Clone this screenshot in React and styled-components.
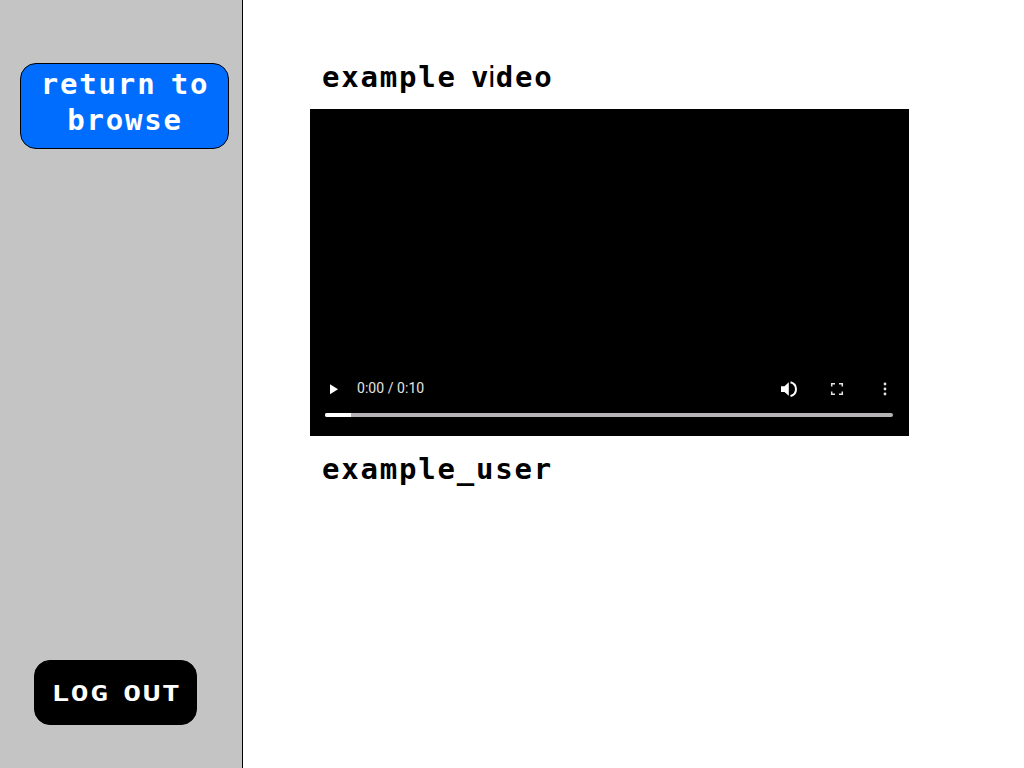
import React from 'react';
import styled, { createGlobalStyle } from 'styled-components';

const GlobalStyle = createGlobalStyle`
  * { box-sizing: border-box; }
  body { margin: 0; background: #fff; overflow: hidden; }
`;

const Page = styled.div`
  display: flex;
  width: 1024px;
  height: 768px;
  font-family: "DejaVu Sans Mono", monospace;
  font-weight: 700;
`;

const Sidebar = styled.aside`
  display: flex;
  flex-direction: column;
  justify-content: space-between;
  align-items: flex-start;
  width: 243px;
  height: 768px;
  flex: none;
  padding: 63px 0 43px 20px;
  background: #c4c4c4;
  border-right: 1px solid #000;
`;

const Button = styled.button`
  font: inherit;
  color: #fff;
  margin: 0;
  border: 1px solid #000;
  border-radius: 16px;
`;

const BrowseButton = styled(Button)`
  width: 209px;
  height: 86px;
  padding: 0 0 9px 1px;
  background: #006dff;
  font-size: 29px;
  line-height: 36px;
  letter-spacing: 1.8px;
  word-spacing: -5px;
  white-space: nowrap;
`;

const LogoutButton = styled(Button)`
  width: 163px;
  height: 65px;
  margin-left: 14px;
  padding: 2px 0 0 0;
  background: #000;
  font-size: 22px;
  line-height: 36px;
  white-space: nowrap;
`;

const WideLabel = styled.span`
  display: inline-block;
  transform: scaleX(1.34);
  letter-spacing: 1.15px;
  word-spacing: -4px;
  margin-right: -1px;
`;

const Main = styled.main`
  display: flex;
  flex-direction: column;
  padding: 59px 0 0 67px;
`;

const Title = styled.h1`
  margin: 0;
  padding-left: 12px;
  height: 50px;
  font-size: 29px;
  line-height: 36px;
  letter-spacing: 1.8px;
  word-spacing: -5px;
  white-space: nowrap;
`;

const TightLetter = styled.span`
  letter-spacing: -0.7px;
`;

const NarrowLetter = styled.span`
  font-family: "DejaVu Sans", sans-serif;
  font-weight: 400;
  letter-spacing: -0.1px;
`;

const Username = styled(Title)`
  margin-top: 15px;
`;

const Player = styled.section`
  display: flex;
  flex-direction: column;
  justify-content: flex-end;
  width: 599px;
  height: 327px;
  padding: 0 16px 19px 15px;
  background: #000;
`;

const Controls = styled.div`
  display: flex;
  align-items: center;
  height: 20px;
  margin-bottom: 14px;
  color: #e4e4e4;
`;

const Time = styled.span`
  flex: 1;
  margin-left: 12px;
  padding-bottom: 1px;
  font: 400 14px/19px Roboto, sans-serif;
  letter-spacing: 0.05px;
`;

const Icon = styled.svg`
  display: block;
  flex: none;
  width: 20px;
  height: 20px;
  fill: currentColor;
  margin-left: ${(p) => p.$gap || 0}px;
  margin-right: ${(p) => p.$end || 0}px;
`;

const Track = styled.div`
  height: 4px;
  border-radius: 2px;
  background: #b5b3b5;
`;

const Loaded = styled.div`
  width: 26px;
  height: 4px;
  border-radius: 2px 0 0 2px;
  background: #fff;
`;

export default function App() {
  return (
    <>
      <GlobalStyle />
      <Page>
        <Sidebar>
          <BrowseButton>return to<br />browse</BrowseButton>
          <LogoutButton><WideLabel>LOG OUT</WideLabel></LogoutButton>
        </Sidebar>
        <Main>
          <Title>example <TightLetter>v</TightLetter><NarrowLetter>i</NarrowLetter>deo</Title>
          <Player>
            <Controls>
              <Icon viewBox="0 0 20 20"><path d="M5 5.200v10l8-5z" fill="#fff" /></Icon>
              <Time>0:00 / 0:10</Time>
              <Icon viewBox="0 0 20 20">
                <path d="M2 7.300h3.500L9.800 3.300v13.500l-4.300-3.800H2z" fill="#fff" />
                <path d="M11.500 3.200c7.300 2 7.300 12 0 13.800" fill="none" stroke="#fff" strokeWidth="2" />
              </Icon>
              <Icon viewBox="0 0 20 20" $gap={28}>
                <path d="M4.700 7.500V4.700H8M12 4.700h3.300v2.800M15.300 12.500v2.800H12M8 15.300H4.700v-2.800" fill="none" stroke="currentColor" strokeWidth="1.500" />
              </Icon>
              <Icon viewBox="0 0 20 20" $gap={28} $end={-2}>
                <circle cx="10" cy="5" r="1.400" /><circle cx="10" cy="10" r="1.400" /><circle cx="10" cy="15" r="1.400" />
              </Icon>
            </Controls>
            <Track><Loaded /></Track>
          </Player>
          <Username>example_user</Username>
        </Main>
      </Page>
    </>
  );
}
